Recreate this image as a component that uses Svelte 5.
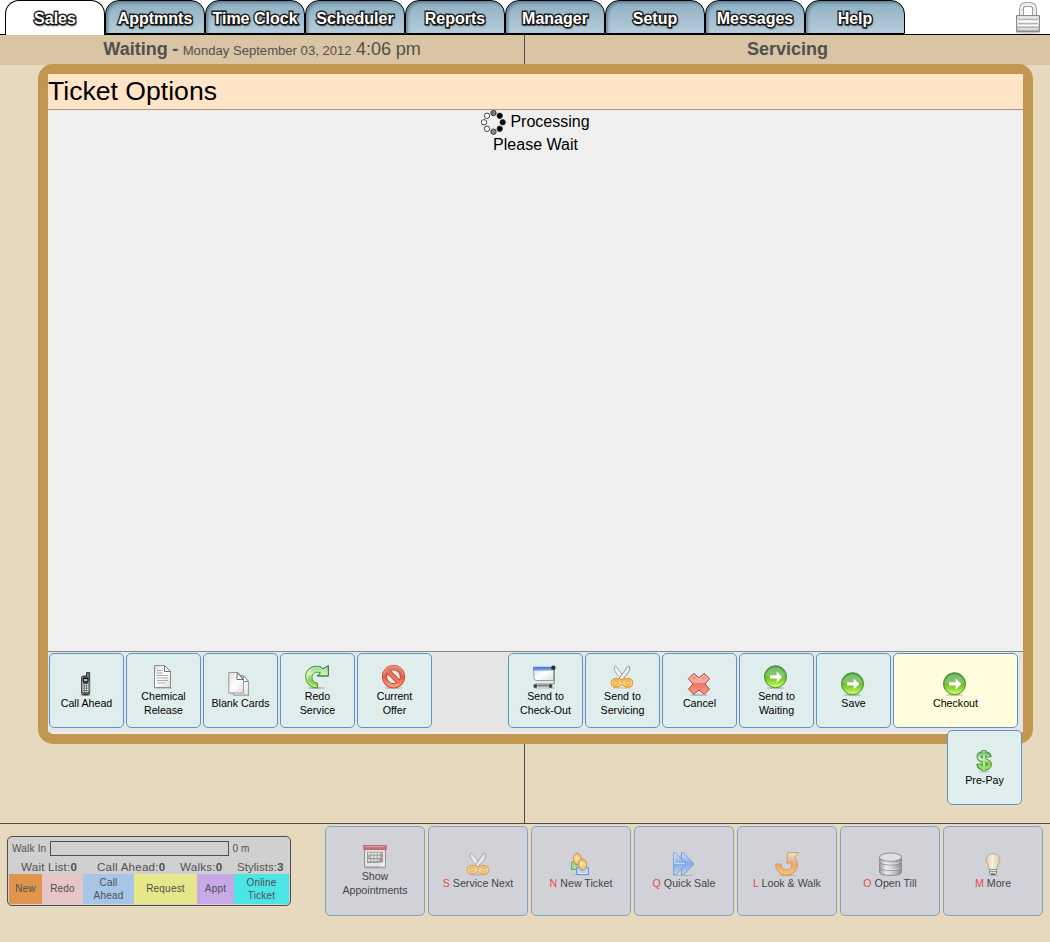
<script>
  const tabs = ['Sales', 'Apptmnts', 'Time Clock', 'Scheduler', 'Reports', 'Manager', 'Setup', 'Messages', 'Help'];
  const leftActions = [
    { icon: 'phone', lines: ['Call Ahead'] },
    { icon: 'doc', lines: ['Chemical', 'Release'] },
    { icon: 'cards', lines: ['Blank Cards'] },
    { icon: 'redo', lines: ['Redo', 'Service'] },
    { icon: 'ban', lines: ['Current', 'Offer'] }
  ];
  const rightActions = [
    { icon: 'cart', lines: ['Send to', 'Check-Out'] },
    { icon: 'scissors', lines: ['Send to', 'Servicing'] },
    { icon: 'cross', lines: ['Cancel'] },
    { icon: 'go', lines: ['Send to', 'Waiting'] },
    { icon: 'go', lines: ['Save'] },
    { icon: 'go', lines: ['Checkout'], primary: true }
  ];
  const shortcuts = [
    { icon: 'calendar', lines: ['Show', 'Appointments'] },
    { icon: 'scissors', key: 'S', lines: ['Service Next'] },
    { icon: 'people', key: 'N', lines: ['New Ticket'] },
    { icon: 'forward', key: 'Q', lines: ['Quick Sale'] },
    { icon: 'hook', key: 'L', lines: ['Look & Walk'] },
    { icon: 'till', key: 'O', lines: ['Open Till'] },
    { icon: 'bulb', key: 'M', lines: ['More'] }
  ];
  const stats = [['Wait List:', 0], ['Call Ahead:', 0], ['Walks:', 0], ['Stylists:', 3]];
  const dots = [
    [12.5, 3, '#777'], [18.7, 5.8, '#000'], [21.7, 12.3, '#000'], [18.7, 18.8, '#000'],
    [12.5, 21.7, '#888'], [6, 18.8, '#fff'], [3, 12.3, '#fff'], [6, 5.8, '#fff']
  ];
</script>

{#snippet icon(name)}
  <svg class="icon" width="24" height="24" viewBox="0 0 24 24">
    {#if name === 'phone'}
      <ellipse cx="11.5" cy="23.2" rx="6" ry=".8" fill="#0003" />
      <path d="M7.5 5.2 8.7 4h3.8V.5h3.2V21q0 2-2 2H9.5q-2 0-2-2z" fill="url(#dark)" stroke="#2c2c2c" stroke-width=".8" />
      <path d="M13.9 1.5v3M8.4 9v10M14.9 9v10" stroke="#b5b5b5" stroke-width=".8" />
      <path d="M9.3 6.5h4.6v3.2H9.3z" fill="#9cc8dc" stroke="#111" />
      <path d="M9.2 12.8h5M9.2 15h5M9.2 17.2h5M9.2 19.4h5" stroke="#f1f1f1" stroke-width="1.5" stroke-dasharray="1.3 .55" />
    {:else if name === 'doc'}
      <path d="M3 23.2h18" stroke="#0003" stroke-width="1.2" />
      <path d="M3.5.5h10l6 6v16h-16z" fill="url(#paper)" stroke="#8c8c8c" />
      <path d="M13.5.5v6h6z" fill="#fff" stroke="#777" />
      <path d="M6 5.5h5M6 8h6M6 10.5h11M6 13h11M6 15.5h11M6 18h8" stroke="#aaa" />
    {:else if name === 'cards'}
      <path d="M2 21.7h12M6 23.7h16" stroke="#0003" />
      <path d="M5.5 3.5h10l5 6v13.5h-15z" fill="url(#paper)" stroke="#999" />
      <path d="M15.5 3.5v6h5z" fill="#fff" stroke="#888" />
      <path d="M.8.5h9l5.7 6v14.5H.8z" fill="url(#paper)" stroke="#999" />
      <path d="M9.5.8q-1 6-.5 6.7h6.2z" fill="#fff" stroke="#666" />
    {:else if name === 'redo'}
      <ellipse cx="11" cy="23" rx="9" ry=".9" fill="#0003" />
      <path d="M12.5 23C5.5 22.8.7 18 .7 11.4.7 3.6 8-.2 15.4 1.8L18 4 23.4.7V11h-11l3.1-3.2C10 5.9 7 9 7 12.2q.2 5.3 5.5 5.8z" fill="url(#greenlight)" stroke="#4c9b2d" />
      <path d="M11.3 21.4C5.5 20.5 2 17 2 11.4 2.2 4.8 9 1.2 15.2 3.3L18.3 5.6 22.2 3" fill="none" stroke="#fff" stroke-opacity=".6" />
      <path d="M15.4 1.8 18 4 23.4.7V11h-11l3.1-3.2" fill="none" stroke="#36844b" />
    {:else if name === 'ban'}
      <ellipse cx="11.5" cy="23" rx="9" ry="1" fill="#0003" />
      <circle cx="11.5" cy="11.7" r="9" fill="none" stroke="#c34432" stroke-width="5.2" />
      <path d="m5.5 5.7 12 12" stroke="#c34432" stroke-width="5" />
      <circle cx="11.5" cy="11.7" r="9" fill="none" stroke="url(#redlight)" stroke-width="3.5" />
      <path d="m5 5.2 13 13" stroke="#ed7763" stroke-width="3.2" />
      <path d="M1.7 10.7a9.8 9.8 0 0 1 19.6 0" fill="none" stroke="#ffc1b0" stroke-opacity=".55" />
    {:else if name === 'cart'}
      <path d="M1 23h21" stroke="#0003" stroke-width="1.2" />
      <path d="M.8 2.5h20v13h-17q-3 0-3-3z" fill="url(#paper)" stroke="#999" />
      <path d="M.3 1.8h19.4v3.6H.3z" fill="#4474d8" />
      <path d="M1 4.1h18" stroke="#8db3f8" />
      <path d="M21.3 2.5v15.2q0 1.3-1.8 1.3H3" fill="none" stroke="#888" stroke-width="1.2" />
      <circle cx="20.4" cy="2.7" r="2.2" fill="#2b2b2b" /><circle cx="2.3" cy="21" r="2" fill="#444" /><circle cx="17.5" cy="21" r="2" fill="#444" />
      <path d="M4.5 20.6h11" stroke="#777" stroke-width="1.8" />
    {:else if name === 'scissors'}
      <ellipse cx="12" cy="22.8" rx="9" ry="1" fill="#0002" />
      <path d="M4.3 2Q5 .5 6.2 1.5L15.5 14l-2.8 1.3Q6 9.5 4.3 5z" fill="#f4f4f4" stroke="#999" stroke-width=".9" />
      <path d="M19.7 2q-.7-1.5-1.9-.5L8.5 14l2.8 1.3Q18 9.5 19.7 5z" fill="#eee" stroke="#888" stroke-width=".9" />
      <path d="M12 14.8q2-1.6 5.5-1.5 5.3.2 5.3 4.7 0 4.2-4.8 4.2-3.8 0-6-2.8-2.2 2.8-6 2.8-4.8 0-4.8-4.2 0-4.5 5.3-4.7 3.5-.1 5.5 1.5z" fill="url(#gold)" stroke="#e8932f" />
      <ellipse cx="6" cy="17.8" rx="2.3" ry="1.4" fill="#e9e8dc" stroke="#e79428" stroke-width=".9" />
      <ellipse cx="18" cy="17.8" rx="2.3" ry="1.4" fill="#e9e8dc" stroke="#e79428" stroke-width=".9" />
      <path d="M11.2 17h1.6" stroke="#c87b22" />
    {:else if name === 'cross'}
      <ellipse cx="12" cy="23" rx="9" ry="1" fill="#0003" />
      <path d="m6.8 1.5 5.2 4.3 5.2-4.3 5.3 5.3L18 12l4.5 5.2-5.3 5.1L12 18l-5.2 4.3-5.3-5.1L6 12 1.5 6.8z" fill="url(#redcross)" stroke="#b94235" stroke-linejoin="round" />
      <path d="m3 6.9 3.9-3.8L12 7.3l5.1-4.2L21 6.9" fill="none" stroke="#fff" stroke-opacity=".55" />
    {:else if name === 'go'}
      <ellipse cx="11.5" cy="23" rx="9" ry="1" fill="#0003" />
      <circle cx="11.5" cy="11.7" r="11" fill="url(#greenball)" stroke="#3f8f38" />
      <path d="M1.7 11a9.9 9.9 0 0 1 19.6 0q-10 2-19.6 0z" fill="#fff" fill-opacity=".25" />
      <path d="M6 10.2h6.7V6.4l5.5 5.5-5.5 5.5v-3.8H6z" fill="#fff" />
    {:else if name === 'dollar'}
      <ellipse cx="12" cy="22.6" rx="6" ry="1" fill="#0002" />
      <g fill="none" stroke-linecap="butt">
        <path d="M12 1v21.3" stroke="#378c3c" stroke-width="4.4" />
        <path d="M17.4 8.2C16.8 5.5 14.5 4.7 12 4.7c-3.5 0-5 1.5-5 3.3 0 4.8 10.4 2.4 10.4 7.2 0 2.6-2.5 3.7-5.2 3.7-3.2 0-5-1.3-5.6-4.2" stroke="#378c3c" stroke-width="5" />
        <path d="M12 1.7v20" stroke="#c2eaa8" stroke-width="2.6" />
        <path d="M17 7.6C16.2 5.3 14.5 4.7 12 4.7c-3.5 0-5 1.5-5 3.3 0 4.8 10.4 2.4 10.4 7.2 0 2.6-2.5 3.7-5.2 3.7-3 0-4.6-1.1-5.2-3.5" stroke="url(#greenlight)" stroke-width="3.1" />
      </g>
    {:else if name === 'calendar'}
      <path d="M1 22.9h22" stroke="#0004" />
      <path d="M1.5 1.5h21v20.5h-21z" fill="#eee" stroke="#777" />
      <path d="M.8.4h22.4v4.2H.8z" fill="#c74e55" stroke="#9c3639" stroke-width=".8" />
      <path d="M2 1.6h20" stroke="#e69a9d" />
      <path d="M4 6.7h16v10.4l-5 1H4z" fill="#888" />
      <path d="M5 8.6h14M5 11.9h14M5 15.2h11" stroke="#eee" stroke-width="2.1" stroke-dasharray="2.3 .9" />
      <path d="M17.8 7.5h2v5.3h-2zM4.3 10.9h2.3v2H4.3z" fill="#d5787a" />
      <path d="m16 21.6 6-6v6z" fill="#fff" stroke="#ccc" stroke-width=".5" />
    {:else if name === 'people'}
      <path d="M3 23h17" stroke="#0003" />
      <path d="M2.5 10h3l1.5 3 4-1v5.5H2.5z" fill="#9bd887" stroke="#4d9d3e" />
      <ellipse cx="8.2" cy="6.7" rx="3.9" ry="5.7" fill="url(#gold)" stroke="#cd7c25" />
      <path d="M7.5 15.5h3l2.5 2.5 3-2.5h3.5v7h-12z" fill="#a9c9ff" stroke="#5182cf" />
      <path d="M9.8 18.5v3h7.5v-3" fill="none" stroke="#eaf3ff" />
      <ellipse cx="13.5" cy="12.4" rx="4" ry="5.6" fill="url(#gold)" stroke="#cd7c25" />
      <path d="M7.4 3.4v5M12.5 9.2v4.5" stroke="#fff4bd" stroke-width="1.5" />
    {:else if name === 'forward'}
      <path d="M2 23.4h19" stroke="#0003" />
      <path d="M9.5.7h1.8L22 12 11.3 23H9.5z" fill="url(#blue)" stroke="#5f84d2" />
      <path d="M1.7.7h1.8L14.4 12 3.5 23H1.7z" fill="url(#blue)" stroke="#5f84d2" />
      <path d="M2.7 2.4v9.1h10" fill="none" stroke="#fff" stroke-opacity=".6" />
    {:else if name === 'hook'}
      <ellipse cx="12" cy="23.2" rx="9" ry=".8" fill="#0003" />
      <path d="M.8 12h5.5c.2 4.5 2.7 6 5.3 6 5 0 6.2-4.7 3.7-8.1l-3 2V.7h11.2l-3.7 4.7c6.2 8.4 1.1 17.6-8.1 17.6C5 23 .5 18.8.8 12z" fill="url(#hook)" stroke="#d8843d" />
    {:else if name === 'till'}
      <ellipse cx="12.5" cy="22.5" rx="11" ry="1.5" fill="#0002" />
      <g fill="url(#metal)" stroke="#777">
        <path d="M1.5 16.5V20c0 4.5 22 4.5 22 0v-3.5z" />
        <path d="M1.5 11v4c0 4.5 22 4.5 22 0v-4z" />
        <path d="M1.5 5.5v4c0 4.5 22 4.5 22 0v-4z" />
        <ellipse cx="12.5" cy="5.2" rx="11" ry="4.2" fill="#e6e6e6" />
      </g>
      <path d="M3.5 10.5c3 2.2 15 2.2 18 0M3.5 16c3 2.2 15 2.2 18 0" fill="none" stroke="#fff" stroke-opacity=".65" />
    {:else if name === 'bulb'}
      <ellipse cx="12" cy="23.2" rx="5" ry=".8" fill="#0003" />
      <path d="M8.3 18.2Q8.2 14.5 6.3 11.7C3.2 7 6.7 1.8 12 1.8s8.8 5.2 5.7 9.9q-2 2.8-2 6.5z" fill="url(#bulb)" stroke="#b4a069" />
      <path d="M8.5 17.5h7v4.2q-3.5 2.5-7 0z" fill="#eee" stroke="#777" />
      <path d="M9 19.6h6" stroke="#777" /><path d="M10 22.2h4" stroke="#333" stroke-width="1.4" />
    {/if}
  </svg>
{/snippet}

{#snippet button(item)}
  <button class="btn" class:primary={item.primary}>
    {@render icon(item.icon)}
    <span class="label">
      {#if item.key}<b>{item.key}</b>{' '}{/if}{#each item.lines as line, i}{#if i}<br />{/if}{line}{/each}
    </span>
  </button>
{/snippet}

<svg class="defs" width="0" height="0">
  <defs>
    <linearGradient id="dark"><stop stop-color="#888" /><stop offset=".4" stop-color="#444" /><stop offset="1" stop-color="#666" /></linearGradient>
    <linearGradient id="paper" x2="1" y2="1"><stop stop-color="#ddd" /><stop offset=".5" stop-color="#fff" /><stop offset="1" stop-color="#ddd" /></linearGradient>
    <linearGradient id="greenlight" x2="0" y2="1"><stop stop-color="#78c878" /><stop offset=".35" stop-color="#d5f3bd" /><stop offset=".65" stop-color="#83cf4c" /><stop offset="1" stop-color="#9cdf57" /></linearGradient>
    <linearGradient id="greenball" x2="0" y2="1"><stop stop-color="#4ba250" /><stop offset=".45" stop-color="#63b52c" /><stop offset=".75" stop-color="#98dc35" /><stop offset="1" stop-color="#dcff88" /></linearGradient>
    <linearGradient id="redlight" x2="0" y2="1"><stop stop-color="#e77f6e" /><stop offset=".5" stop-color="#e95843" /><stop offset="1" stop-color="#ff9777" /></linearGradient>
    <linearGradient id="redcross" x2="0" y2="1"><stop stop-color="#e87567" /><stop offset=".4" stop-color="#f5b3aa" /><stop offset=".5" stop-color="#e87566" /><stop offset="1" stop-color="#ff9b82" /></linearGradient>
    <linearGradient id="gold" x2="0" y2="1"><stop stop-color="#f6a13b" /><stop offset=".5" stop-color="#ffd98b" /><stop offset="1" stop-color="#ffb52f" /></linearGradient>
    <linearGradient id="blue" x2="0" y2="1"><stop stop-color="#d4e3fb" /><stop offset=".5" stop-color="#6c9fea" /><stop offset="1" stop-color="#b9dcff" /></linearGradient>
    <linearGradient id="hook" x2="0" y2="1"><stop stop-color="#f6eadc" /><stop offset=".5" stop-color="#ee9a4c" /><stop offset="1" stop-color="#ffc44b" /></linearGradient>
    <linearGradient id="metal"><stop stop-color="#888" /><stop offset=".3" stop-color="#f5f5f5" /><stop offset=".6" stop-color="#ccc" /><stop offset="1" stop-color="#777" /></linearGradient>
    <linearGradient id="bulb"><stop stop-color="#e7cf91" /><stop offset=".45" stop-color="#fffbed" /><stop offset="1" stop-color="#dec789" /></linearGradient>
    <linearGradient id="lock" x2="0" y2="1"><stop stop-color="#bbb" /><stop offset=".35" stop-color="#f2f2f2" /><stop offset="1" stop-color="#aaa" /></linearGradient>
  </defs>
</svg>

<div class="app">
  <nav>
    {#each tabs as tab, i}
      <a class="tab" class:active={i === 0}><span>{tab}</span></a>
    {/each}
    <svg class="lock" width="26" height="33" viewBox="0 0 26 33">
      <ellipse cx="13" cy="31.5" rx="12.5" ry="1.3" fill="#0003" />
      <path d="M6.5 15V8.5q0-5 4-5h5q4 0 4 5V15" fill="none" stroke="#888" stroke-width="4.6" />
      <path d="M6.5 15V8.5q0-5 4-5h5q4 0 4 5V15" fill="none" stroke="#eee" stroke-width="2.8" />
      <path d="M1.5 14.5h23v16h-23z" fill="url(#lock)" stroke="#8a8a8a" />
      <path d="M3 16h20M3 20.5h20M3 24.5h20M3 28h20" stroke="#fff" stroke-width="1.2" />
      <path d="M3 18.5h20M3 22.5h20M3 26.5h20" stroke="#aaa" stroke-width=".8" />
    </svg>
  </nav>

  <main>
    <section>
      <header class="waiting"><strong>Waiting -</strong> <small>Monday September 03, 2012</small> 4:06 pm</header>
    </section>
    <section>
      <header><strong>Servicing</strong></header>
    </section>
  </main>

  <footer>
    <div class="status">
      <div class="walkin"><span>Walk In</span><i></i><span>0 m</span></div>
      <div class="stats">
        {#each stats as [name, count]}<span>{name}<strong>{count}</strong></span>{/each}
      </div>
      <div class="legend">
        <span class="new">New</span><span class="redo">Redo</span><span class="call">Call<br />Ahead</span>
        <span class="request">Request</span><span class="appt">Appt</span><span class="online">Online<br />Ticket</span>
      </div>
    </div>
    <div class="shortcuts">
      {#each shortcuts as item}{@render button(item)}{/each}
    </div>
  </footer>

  <div class="dialog">
    <h1>Ticket Options</h1>
    <div class="body">
      <div class="processing">
        <svg width="25" height="25" viewBox="0 0 25 25">
          {#each dots as [x, y, fill]}<circle cx={x} cy={y} r="2.7" {fill} stroke="#333" stroke-width=".9" />{/each}
        </svg>
        <span>Processing</span>
      </div>
      <div>Please Wait</div>
    </div>
    <div class="actions">
      <div>{#each leftActions as item}{@render button(item)}{/each}</div>
      <div>{#each rightActions as item}{@render button(item)}{/each}</div>
    </div>
    <div class="prepay">{@render button({ icon: 'dollar', lines: ['Pre-Pay'] })}</div>
  </div>
</div>

<style>
  :global(body) { margin: 0; background: #e6d9bd; }
  * { box-sizing: border-box; }
  .defs { position: absolute; }
  .app { position: relative; width: 1050px; height: 942px; display: flex; flex-direction: column; overflow: hidden; background: #e6d9bd; font-family: "Liberation Sans", Arial, sans-serif; }
  nav { display: flex; flex: none; height: 35px; padding-left: 5px; background: #fff; border-bottom: 1px solid #000; }
  .tab { width: 100px; height: 34px; border: 1px solid #000; border-radius: 14px 14px 0 0; background: linear-gradient(#8cafc3, #b7ccd9); box-shadow: inset 2px 2px 3px #4a6777aa; text-align: center; font: bold 16px/35px "Liberation Sans", Arial, sans-serif; color: #fff; }
  .tab span { -webkit-text-stroke: 2.8px #222; paint-order: stroke fill; text-shadow: 1px 2px 2px #0009; }
  .tab.active { height: 35px; border-bottom: 0; background: #fff; box-shadow: none; }
  .lock { margin: 1px 9px 0 auto; }
  main { display: flex; flex: none; height: 789px; border-bottom: 1px solid #4d4d4d; }
  section { flex: 1; }
  section:first-child { flex: 0 0 525px; border-right: 1px solid #4d4d4d; }
  header { height: 30px; background: #d9c4a4; color: #505050; text-align: center; font-size: 18px; line-height: 29px; white-space: nowrap; }
  header.waiting { word-spacing: -.5px; }
  header small { font-size: 13.1px; word-spacing: 0; }
  footer { display: flex; flex: none; padding: 2px 7px 0; }
  .status { width: 284px; height: 70px; margin-top: 10px; padding: 4px 1px 1px; border: 1px solid #4d4d4d; border-radius: 5px; background: #d0d0d0; color: #505050; font-size: 10px; letter-spacing: .2px; }
  .walkin { display: flex; align-items: center; gap: 3.5px; height: 15px; padding-left: 3px; }
  .walkin i { width: 179px; height: 15px; border: 1px solid #4d4d4d; }
  .stats { display: grid; grid-template-columns: 76px 83px 57px 1fr; height: 18px; padding: 4px 0 0 12px; font-size: 11.6px; line-height: 13px; letter-spacing: .22px; white-space: nowrap; }
  .stats span:last-child { letter-spacing: 0; }
  .legend { display: grid; grid-template-columns: 33px 41px 51px 63px 37px 55px; height: 30px; line-height: 13px; text-align: center; }
  .legend span { display: grid; place-content: center; padding-bottom: 1px; }
  .new { background: #df954c; }
  .redo { background: #e5c5c7; }
  .call { background: #a7c5e6; }
  .request { background: #e6e68b; }
  .appt { background: #c6a9e5; }
  .online { background: #4ce5e5; }
  .shortcuts { display: flex; gap: 3px; margin-left: 34px; }
  .btn { display: flex; flex-direction: column; align-items: center; justify-content: center; width: 75px; height: 75px; margin: 0; padding: 1px 0 0; border: 1px solid #5c95c4; border-radius: 5px; background: #e0eded; color: #000; font: 10.67px/14px "Liberation Sans", Arial, sans-serif; text-align: center; }
  .btn.primary { width: 125px; background: #fffddd; }
  .btn b { font-weight: normal; color: #e8474b; }
  .icon { flex: none; margin-right: 1px; }
  .shortcuts .btn { width: 100px; height: 90px; padding: 0 0 1px; border-color: #81a5c2; background: #d0d2d7; color: #464646; }
  .shortcuts .icon { opacity: .75; margin-right: 0; }
  .dialog { position: absolute; left: 38px; top: 64px; width: 995px; height: 680px; display: flex; flex-direction: column; border: 10px solid #c1964f; border-radius: 15px; background: #efefef; }
  h1 { margin: 0; height: 36px; border-bottom: 1px solid #a8957d; background: #ffe4c8; font-size: 26.6px; font-weight: normal; line-height: 34px; }
  .body { flex: 1; font-size: 16px; line-height: 20px; text-align: center; }
  .processing { display: flex; justify-content: center; gap: 4px; height: 25px; line-height: 23px; }
  .actions { display: flex; justify-content: space-between; height: 81px; margin-bottom: 2px; padding: 1px 5px 0 1px; border-top: 1px solid #868a86; background: #e5e5e5; }
  .actions > div { display: flex; gap: 2px; }
  .prepay { position: absolute; right: 1px; top: 656px; }
</style>
